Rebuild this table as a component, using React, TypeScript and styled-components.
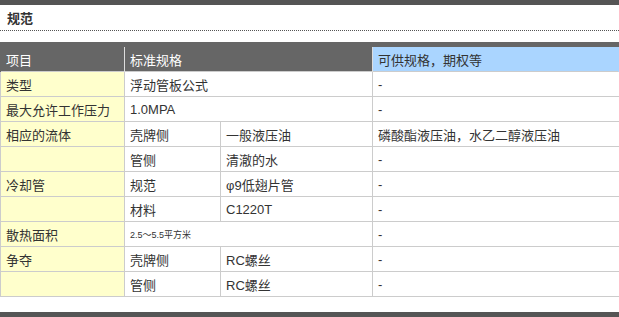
import React from "react";
import styled, { createGlobalStyle } from "styled-components";

const Global = createGlobalStyle`
  html, body { margin: 0; padding: 0; background: #fff; }
  body { font-family: "Liberation Sans", "Noto Sans CJK SC", sans-serif; color: #333; }
`;

const Page = styled.div`
  width: 619px;
  display: flex;
  flex-direction: column;
`;

const Bar = styled.div<{ $top?: number }>`
  height: 5px;
  background: #555;
  margin-top: ${(p) => p.$top ?? 0}px;
`;

const Heading = styled.h2`
  margin: 0 0 11px;
  height: 25px;
  line-height: 27px;
  padding: 0 7px;
  font-size: 13px;
  font-weight: bold;
  color: #333;
  border-bottom: 1px dotted #555;
`;

const Table = styled.table`
  width: 619px;
  table-layout: fixed;
  border-collapse: collapse;
  font-size: 13px;
`;

const HeadCell = styled.th<{ $light?: boolean }>`
  height: 24px;
  padding: 0 5px;
  text-align: left;
  font-weight: normal;
  border-top: 5px solid #666;
  border-left: 1px solid #ddd;
  border-right: 1px solid #ddd;
  background: ${(p) => (p.$light ? "#aad5ff" : "#666")};
  color: ${(p) => (p.$light ? "#333" : "#fff")};
  &:first-child { border-left-color: #666; }
  &:last-child { border-right-color: #aad5ff; }
`;

const Cell = styled.td<{ $label?: boolean; $small?: boolean }>`
  height: 24px;
  padding: 0 5px;
  border: 1px solid #ccc;
  background: ${(p) => (p.$label ? "#ffffcc" : "#fff")};
  color: #333;
  font-size: ${(p) => (p.$small ? "9px" : "13px")};
  white-space: nowrap;
  &:last-child { border-right-color: #fff; }
`;

type Row = { label: string; cells: { text: string; span?: number; small?: boolean }[]; avail: string };

const rows: Row[] = [
  { label: "类型", cells: [{ text: "浮动管板公式", span: 2 }], avail: "-" },
  { label: "最大允许工作压力", cells: [{ text: "1.0MPA", span: 2 }], avail: "-" },
  { label: "相应的流体", cells: [{ text: "壳牌侧" }, { text: "一般液压油" }], avail: "磷酸酯液压油，水乙二醇液压油" },
  { label: "", cells: [{ text: "管侧" }, { text: "清澈的水" }], avail: "-" },
  { label: "冷却管", cells: [{ text: "规范" }, { text: "φ9低翅片管" }], avail: "-" },
  { label: "", cells: [{ text: "材料" }, { text: "C1220T" }], avail: "-" },
  { label: "散热面积", cells: [{ text: "2.5～5.5平方米", span: 2, small: true }], avail: "-" },
  { label: "争夺", cells: [{ text: "壳牌侧" }, { text: "RC螺丝" }], avail: "-" },
  { label: "", cells: [{ text: "管侧" }, { text: "RC螺丝" }], avail: "-" },
];

export default function App() {
  return (
    <Page>
      <Global />
      <Bar />
      <Heading>规范</Heading>
      <Table>
        <colgroup>
          <col style={{ width: 124 }} />
          <col style={{ width: 96 }} />
          <col style={{ width: 152 }} />
          <col />
        </colgroup>
        <thead>
          <tr>
            <HeadCell>项目</HeadCell>
            <HeadCell colSpan={2}>标准规格</HeadCell>
            <HeadCell $light>可供规格，期权等</HeadCell>
          </tr>
        </thead>
        <tbody>
          {rows.map((r, i) => (
            <tr key={i}>
              <Cell $label>{r.label}</Cell>
              {r.cells.map((c, j) => (
                <Cell key={j} colSpan={c.span} $small={c.small}>
                  {c.text}
                </Cell>
              ))}
              <Cell>{r.avail}</Cell>
            </tr>
          ))}
        </tbody>
      </Table>
      <Bar $top={15} />
    </Page>
  );
}
